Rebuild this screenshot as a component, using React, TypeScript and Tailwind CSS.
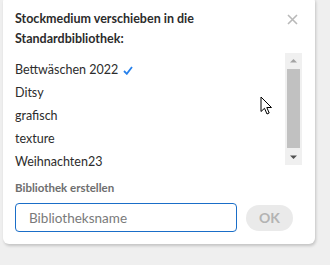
const ITEMS = ['Bettwäschen 2022', 'Ditsy', 'grafisch', 'texture', 'Weihnachten23'];

export default function App() {
  return (
    <div className="w-[330px] h-[265px] bg-[#efefef] overflow-hidden relative" style={{ fontFamily: 'Lato, "Open Sans", sans-serif' }}>
      <div className="ml-[3px] -mt-1 w-[312px] h-[248px] bg-white rounded-md shadow-[1px_2px_3px_rgba(0,0,0,0.18)] pl-3 pr-[13px] pt-[13px] flex flex-col">
        <div className="flex items-start">
          <h2 className="flex-1 text-[12.5px] leading-[20px] font-bold text-[#2c2c2c]">
            Stockmedium verschieben in die
            <br />
            Standardbibliothek:
          </h2>
          <svg width="11" height="11" viewBox="0 0 11 11" className="mt-[5px] mr-[4px]">
            <path d="M1 1L10 10M10 1L1 10" stroke="#b9b9b9" strokeWidth="1.6" />
          </svg>
        </div>

        <div className="flex mt-1 h-[112px]">
          <ul className="flex-1 pt-[6px]">
            {ITEMS.map((name, i) => (
              <li key={name} className="h-[23px] flex items-center text-[12.5px] text-[#2c2c2c]">
                {name}
                {i === 0 && (
                  <svg width="10" height="9" viewBox="0 0 10 9" className="ml-[5px]">
                    <path d="M1 5L3.8 7.8L9 1" stroke="#2680eb" strokeWidth="1.8" fill="none" />
                  </svg>
                )}
              </li>
            ))}
          </ul>
          <div className="w-[17px] bg-[#f0f0f0] flex flex-col items-center">
            <svg width="9" height="16" viewBox="0 0 9 16">
              <path d="M1 9.5L4.5 6L8 9.5Z" fill="#a3a3a3" />
            </svg>
            <div className="w-[13px] h-[79px] bg-[#c1c1c1]" />
            <div className="flex-1" />
            <svg width="9" height="16" viewBox="0 0 9 16">
              <path d="M1 6.5L4.5 10L8 6.5Z" fill="#505050" />
            </svg>
          </div>
        </div>

        <p className="mt-[15px] text-[11.5px] font-bold text-[#6e6e6e] leading-[16px]">Bibliothek erstellen</p>

        <div className="flex items-center mt-[7px]">
          <input
            className="w-[222px] h-[29px] border border-[#1a6ec8] rounded-[4px] px-[13px] text-[13.5px] outline-none placeholder:text-[#7a7a7a]"
            placeholder="Bibliotheksname"
          />
          <button className="ml-[9px] w-[47px] h-[26px] rounded-full bg-[#eaeaea] text-[#b3b3b3] text-[14px] font-bold">OK</button>
        </div>
      </div>

      <svg width="14" height="20" viewBox="0 0 14 20" className="absolute left-[260px] top-[96px]">
        <path d="M1 1V15.5L4.5 12.3L7 18L9.2 17L6.8 11.5H11.5Z" fill="white" stroke="black" strokeWidth="1" strokeLinejoin="round" />
      </svg>
    </div>
  );
}
